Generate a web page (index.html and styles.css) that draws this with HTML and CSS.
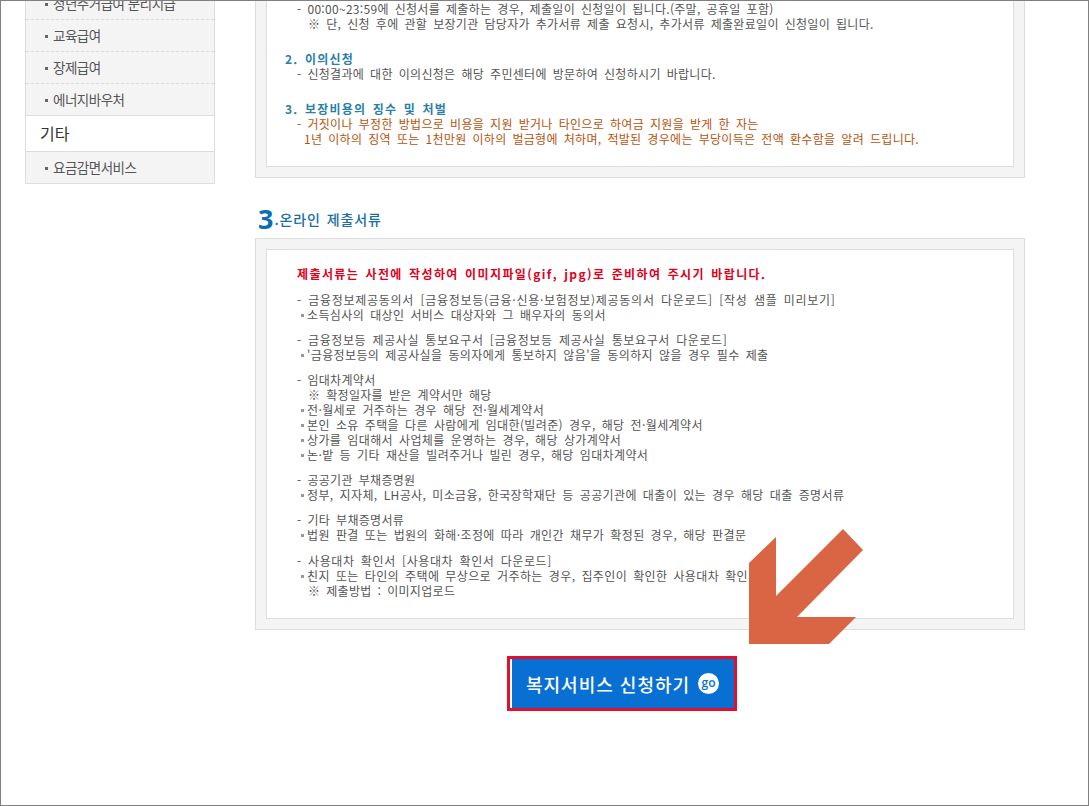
FILE: index.html
```html
<!DOCTYPE html>
<html lang="ko">
<head>
<meta charset="utf-8">
<title>복지서비스 신청 안내</title>
<link rel="stylesheet" href="styles.css">
</head>
<body>
<div class="frame">
  <aside class="side">
    <div class="item">청년주거급여 분리지급</div>
    <div class="item">교육급여</div>
    <div class="item">장제급여</div>
    <div class="item last">에너지바우처</div>
    <div class="head">기타</div>
    <div class="item last">요금감면서비스</div>
  </aside>
  <main class="main">
    <section class="outer">
      <div class="inner first">
        <p class="t">- 00:00~23:59에 신청서를 제출하는 경우, 제출일이 신청일이 됩니다.(주말, 공휴일 포함)</p>
        <p class="t note">※ 단, 신청 후에 관할 보장기관 담당자가 추가서류 제출 요청시, 추가서류 제출완료일이 신청일이 됩니다.</p>
        <h3 class="sub">2. 이의신청</h3>
        <p class="t">- 신청결과에 대한 이의신청은 해당 주민센터에 방문하여 신청하시기 바랍니다.</p>
        <h3 class="sub">3. 보장비용의 징수 및 처벌</h3>
        <p class="t warn">- 거짓이나 부정한 방법으로 비용을 지원 받거나 타인으로 하여금 지원을 받게 한 자는</p>
        <p class="t warn cont">1년 이하의 징역 또는 1천만원 이하의 벌금형에 처하며, 적발된 경우에는 부당이득은 전액 환수함을 알려 드립니다.</p>
      </div>
    </section>
    <h2 class="title"><span class="num">3</span><span class="ttl">.온라인 제출서류</span></h2>
    <section class="outer">
      <div class="inner second">
        <p class="red">제출서류는 사전에 작성하여 이미지파일(gif, jpg)로 준비하여 주시기 바랍니다.</p>
        <div class="grp">
          <p class="t loose-l">- 금융정보제공동의서 [금융정보등(금융·신용·보험정보)제공동의서 다운로드] [작성 샘플 미리보기]</p>
          <p class="t b">소득심사의 대상인 서비스 대상자와 그 배우자의 동의서</p>
        </div>
        <div class="grp">
          <p class="t loose">- 금융정보등 제공사실 통보요구서 [금융정보등 제공사실 통보요구서 다운로드]</p>
          <p class="t b">'금융정보등의 제공사실을 동의자에게 통보하지 않음'을 동의하지 않을 경우 필수 제출</p>
        </div>
        <div class="grp">
          <p class="t">- 임대차계약서</p>
          <p class="t note">※ 확정일자를 받은 계약서만 해당</p>
          <p class="t b">전·월세로 거주하는 경우 해당 전·월세계약서</p>
          <p class="t b">본인 소유 주택을 다른 사람에게 임대한(빌려준) 경우, 해당 전·월세계약서</p>
          <p class="t b">상가를 임대해서 사업체를 운영하는 경우, 해당 상가계약서</p>
          <p class="t b">논·밭 등 기타 재산을 빌려주거나 빌린 경우, 해당 임대차계약서</p>
        </div>
        <div class="grp">
          <p class="t">- 공공기관 부채증명원</p>
          <p class="t b">정부, 지자체, LH공사, 미소금융, 한국장학재단 등 공공기관에 대출이 있는 경우 해당 대출 증명서류</p>
        </div>
        <div class="grp wide">
          <p class="t">- 기타 부채증명서류</p>
          <p class="t b">법원 판결 또는 법원의 화해·조정에 따라 개인간 채무가 확정된 경우, 해당 판결문</p>
        </div>
        <div class="grp">
          <p class="t loose">- 사용대차 확인서 [사용대차 확인서 다운로드]</p>
          <p class="t b">친지 또는 타인의 주택에 무상으로 거주하는 경우, 집주인이 확인한 사용대차 확인서</p>
          <p class="t note">※ 제출방법 : 이미지업로드</p>
        </div>
      </div>
    </section>
    <a class="apply" href="#"><span class="apply-in">복지서비스 신청하기<span class="go">go</span></span></a>
  </main>
  <svg class="arrow" width="1089" height="806" viewBox="0 0 1089 806" aria-hidden="true">
    <polygon points="843,529 863,550 797,617 856,617 829,644 749,644 749,563 776,537 776,596" fill="#d96545"/>
  </svg>
</div>
</body>
</html>
```
FILE: styles.css
```css
* { box-sizing: border-box; }
html, body { margin: 0; padding: 0; background: #fff; }
.frame {
  position: relative;
  display: flex;
  align-items: flex-start;
  width: 1089px;
  height: 806px;
  overflow: hidden;
  border: 1px solid #808080;
  font-family: "Noto Sans CJK KR", "Noto Sans", sans-serif;
  color: #555;
}
.side {
  width: 190px;
  margin: -13px 0 0 24px;
  flex: none;
  border-left: 1px solid #ddd;
  border-right: 1px solid #ddd;
  border-bottom: 1px solid #ddd;
  background: #f4f4f4;
}
.item {
  position: relative;
  height: 32px;
  line-height: 31px;
  padding-left: 27px;
  font-size: 13.5px;
  letter-spacing: -0.5px;
  color: #555;
  border-bottom: 1px dashed #ddd;
}
.item::before {
  content: "";
  position: absolute;
  left: 19px;
  top: 15px;
  width: 3px;
  height: 3px;
  background: #666;
}
.item.last { border-bottom: 1px solid #ddd; }
.side > .item.last:last-child { border-bottom: 0; height: 31px; }
.head {
  height: 36px;
  line-height: 34px;
  padding-left: 14px;
  background: #fff;
  border-bottom: 1px solid #ddd;
  font-size: 16px;
  color: #333;
}
.main {
  width: 770px;
  margin: -31px 0 0 40px;
  flex: none;
}
.outer {
  border: 1px solid #ddd;
  background: #f4f4f4;
  padding: 10px;
}
.inner {
  background: #fff;
  border: 1px solid #ddd;
}
.first { padding: 19px 0 20px 18px; }
.second { padding: 16px 0 20px 30px; }
p, h2, h3 { margin: 0; font-weight: 400; }
.t {
  font-size: 12px;
  line-height: 15px;
  letter-spacing: 0.3px;
  word-spacing: 2.3px;
  white-space: nowrap;
  font-weight: 400;
}
.t.loose { letter-spacing: 0.6px; }
.t.loose-l { letter-spacing: 0.72px; }
.second .t.b { letter-spacing: 0.38px; }
.first .t { padding-left: 12px; }
.first .note { padding-left: 23px; }
.second .note { padding-left: 11px; }
.warn { color: #b5540f; }
.first .cont { padding-left: 19px; }
.sub {
  margin-top: 20px;
  font-size: 12px;
  line-height: 15px;
  font-weight: 700;
  letter-spacing: 1.2px;
  word-spacing: 2px;
  color: #2a7fa8;
}
.red {
  font-size: 12px;
  line-height: 15px;
  font-weight: 700;
  letter-spacing: 1.4px;
  word-spacing: 1.5px;
  color: #e0001b;
  margin-bottom: 11px;
}
.grp { margin-bottom: 10px; }
.grp.wide { margin-bottom: 11px; }
.grp:last-child { margin-bottom: 0; }
.second .b { position: relative; padding-left: 10px; }
.second .b::before {
  content: "";
  position: absolute;
  left: 4px;
  top: 7px;
  width: 3px;
  height: 3px;
  background: #999;
}
.title {
  display: flex;
  align-items: center;
  height: 60px;
  padding: 27px 0 5px 3px;
  color: #1a6ea3;
}
.num {
  font-size: 27px;
  line-height: 28px;
  font-weight: 700;
  color: #0b6db3;
  font-family: "Open Sans", sans-serif;
}
.ttl {
  margin-left: 1px;
  font-size: 14px;
  line-height: 28px;
  letter-spacing: 0.9px;
  word-spacing: 1px;
  font-weight: 500;
}
.apply {
  display: block;
  width: 230px;
  height: 55px;
  margin: 26px 0 0 252px;
  border: 3px solid #e3102c;
  padding-left: 2px;
  background: #fff;
  text-decoration: none;
}
.apply-in {
  display: flex;
  align-items: center;
  height: 100%;
  padding-left: 14px;
  background: #0870d2;
  color: #fff;
  font-size: 18px;
  font-weight: 500;
  letter-spacing: 1px;
  word-spacing: 0;
  white-space: nowrap;
}
.go {
  display: block;
  flex: none;
  width: 21px;
  height: 21px;
  margin-left: 8px;
  border-radius: 50%;
  background: #fff;
  color: #0870d2;
  font-size: 12px;
  line-height: 19px;
  text-align: center;
  letter-spacing: 0;
  font-weight: 600;
  font-family: "Open Sans", sans-serif;
}
.arrow {
  position: absolute;
  left: -1px;
  top: -1px;
  pointer-events: none;
}
```
